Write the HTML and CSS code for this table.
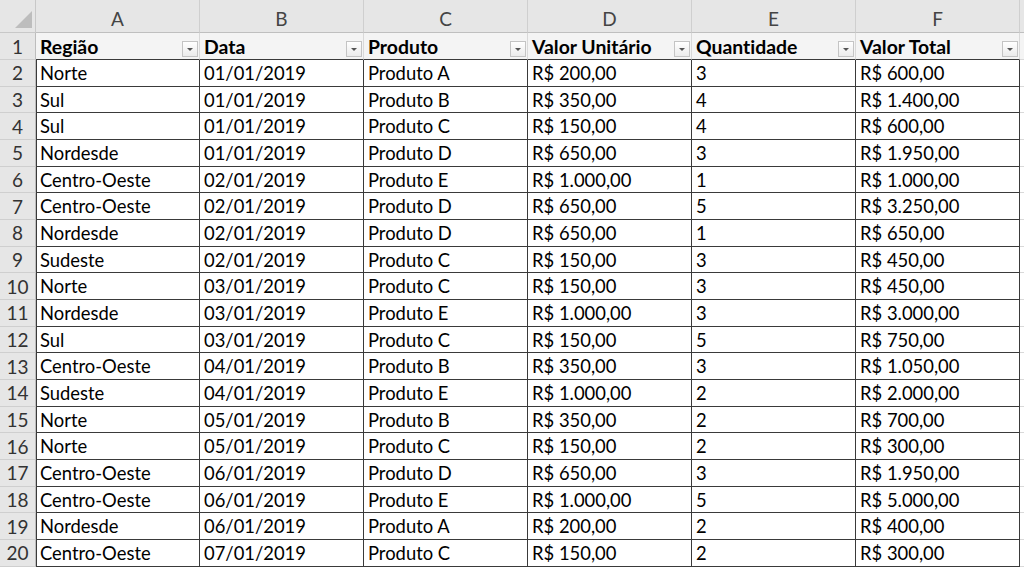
FILE: index.html
```html
<!DOCTYPE html>
<html>
<head>
<meta charset="utf-8">
<link rel="stylesheet" href="styles.css">
</head>
<body>
<div class="sheet">
  <div class="corner"><span class="tri"></span></div>
  <div class="colh">A</div><div class="colh">B</div><div class="colh">C</div><div class="colh">D</div><div class="colh">E</div><div class="colh">F</div><div class="colh end"></div>

  <div class="rowh">1</div>
  <div class="hd"><span>Região</span><span class="fb"></span></div>
  <div class="hd"><span>Data</span><span class="fb"></span></div>
  <div class="hd"><span>Produto</span><span class="fb"></span></div>
  <div class="hd"><span>Valor Unitário</span><span class="fb"></span></div>
  <div class="hd"><span>Quantidade</span><span class="fb"></span></div>
  <div class="hd"><span>Valor Total</span><span class="fb"></span></div>
  <div class="gap top"></div>

  <div class="rowh">2</div><div class="c a">Norte</div><div class="c">01/01/2019</div><div class="c">Produto A</div><div class="c">R$ 200,00</div><div class="c">3</div><div class="c">R$ 600,00</div><div class="gap"></div>
  <div class="rowh">3</div><div class="c a">Sul</div><div class="c">01/01/2019</div><div class="c">Produto B</div><div class="c">R$ 350,00</div><div class="c">4</div><div class="c">R$ 1.400,00</div><div class="gap"></div>
  <div class="rowh">4</div><div class="c a">Sul</div><div class="c">01/01/2019</div><div class="c">Produto C</div><div class="c">R$ 150,00</div><div class="c">4</div><div class="c">R$ 600,00</div><div class="gap"></div>
  <div class="rowh">5</div><div class="c a">Nordesde</div><div class="c">01/01/2019</div><div class="c">Produto D</div><div class="c">R$ 650,00</div><div class="c">3</div><div class="c">R$ 1.950,00</div><div class="gap"></div>
  <div class="rowh">6</div><div class="c a">Centro-Oeste</div><div class="c">02/01/2019</div><div class="c">Produto E</div><div class="c">R$ 1.000,00</div><div class="c">1</div><div class="c">R$ 1.000,00</div><div class="gap"></div>
  <div class="rowh">7</div><div class="c a">Centro-Oeste</div><div class="c">02/01/2019</div><div class="c">Produto D</div><div class="c">R$ 650,00</div><div class="c">5</div><div class="c">R$ 3.250,00</div><div class="gap"></div>
  <div class="rowh">8</div><div class="c a">Nordesde</div><div class="c">02/01/2019</div><div class="c">Produto D</div><div class="c">R$ 650,00</div><div class="c">1</div><div class="c">R$ 650,00</div><div class="gap"></div>
  <div class="rowh">9</div><div class="c a">Sudeste</div><div class="c">02/01/2019</div><div class="c">Produto C</div><div class="c">R$ 150,00</div><div class="c">3</div><div class="c">R$ 450,00</div><div class="gap"></div>
  <div class="rowh">10</div><div class="c a">Norte</div><div class="c">03/01/2019</div><div class="c">Produto C</div><div class="c">R$ 150,00</div><div class="c">3</div><div class="c">R$ 450,00</div><div class="gap"></div>
  <div class="rowh">11</div><div class="c a">Nordesde</div><div class="c">03/01/2019</div><div class="c">Produto E</div><div class="c">R$ 1.000,00</div><div class="c">3</div><div class="c">R$ 3.000,00</div><div class="gap"></div>
  <div class="rowh">12</div><div class="c a">Sul</div><div class="c">03/01/2019</div><div class="c">Produto C</div><div class="c">R$ 150,00</div><div class="c">5</div><div class="c">R$ 750,00</div><div class="gap"></div>
  <div class="rowh">13</div><div class="c a">Centro-Oeste</div><div class="c">04/01/2019</div><div class="c">Produto B</div><div class="c">R$ 350,00</div><div class="c">3</div><div class="c">R$ 1.050,00</div><div class="gap"></div>
  <div class="rowh">14</div><div class="c a">Sudeste</div><div class="c">04/01/2019</div><div class="c">Produto E</div><div class="c">R$ 1.000,00</div><div class="c">2</div><div class="c">R$ 2.000,00</div><div class="gap"></div>
  <div class="rowh">15</div><div class="c a">Norte</div><div class="c">05/01/2019</div><div class="c">Produto B</div><div class="c">R$ 350,00</div><div class="c">2</div><div class="c">R$ 700,00</div><div class="gap"></div>
  <div class="rowh">16</div><div class="c a">Norte</div><div class="c">05/01/2019</div><div class="c">Produto C</div><div class="c">R$ 150,00</div><div class="c">2</div><div class="c">R$ 300,00</div><div class="gap"></div>
  <div class="rowh">17</div><div class="c a">Centro-Oeste</div><div class="c">06/01/2019</div><div class="c">Produto D</div><div class="c">R$ 650,00</div><div class="c">3</div><div class="c">R$ 1.950,00</div><div class="gap"></div>
  <div class="rowh">18</div><div class="c a">Centro-Oeste</div><div class="c">06/01/2019</div><div class="c">Produto E</div><div class="c">R$ 1.000,00</div><div class="c">5</div><div class="c">R$ 5.000,00</div><div class="gap"></div>
  <div class="rowh">19</div><div class="c a">Nordesde</div><div class="c">06/01/2019</div><div class="c">Produto A</div><div class="c">R$ 200,00</div><div class="c">2</div><div class="c">R$ 400,00</div><div class="gap"></div>
  <div class="rowh">20</div><div class="c a">Centro-Oeste</div><div class="c">07/01/2019</div><div class="c">Produto C</div><div class="c">R$ 150,00</div><div class="c">2</div><div class="c">R$ 300,00</div><div class="gap"></div>
</div>
</body>
</html>
```

FILE: styles.css
```css
html, body {
  margin: 0;
  padding: 0;
  background: #ffffff;
  overflow: hidden;
}
.sheet {
  display: grid;
  grid-template-columns: 36px repeat(6, 164px) 4px;
  grid-template-rows: 33px 27px repeat(19, 26.68px);
  width: 1024px;
  height: 568px;
  font-family: Lato, "Liberation Sans", sans-serif;
  font-size: 18.4px;
  font-variant-ligatures: none;
  font-feature-settings: "liga" 0, "dlig" 0;
  color: #000;
}
.sheet > div {
  box-sizing: border-box;
  min-width: 0;
}
.corner {
  background: #e6e6e6;
  border-right: 1px solid #c8c8c8;
  border-bottom: 1px solid #c8c8c8;
  display: flex;
  justify-content: flex-end;
  align-items: flex-end;
  padding: 0 3px 4px 0;
}
.tri {
  width: 0;
  height: 0;
  border-left: 17px solid transparent;
  border-bottom: 17px solid #bdbdbd;
}
.colh {
  background: #e6e6e6;
  border-right: 1px solid #cfcfcf;
  border-bottom: 1px solid #bfbfbf;
  color: #444;
  font-size: 19px;
  display: flex;
  justify-content: center;
  align-items: center;
  padding-top: 4px;
}
.colh.end {
  border-right: none;
}
.rowh {
  background: #e6e6e6;
  border-right: 1px solid #bdbdbd;
  border-bottom: 1px solid #cfcfcf;
  color: #333;
  font-size: 19px;
  display: flex;
  justify-content: center;
  align-items: center;
}
.hd {
  background: #f4f4f4;
  border-right: 1px solid #d9d9d9;
  border-bottom: 1px solid #3a3a3a;
  font-weight: bold;
  font-size: 19.4px;
  display: flex;
  justify-content: space-between;
  align-items: center;
  padding-left: 4px;
  padding-right: 1px;
  white-space: nowrap;
}
.fb {
  width: 16px;
  height: 16px;
  box-sizing: border-box;
  align-self: flex-end;
  margin-bottom: 2px;
  border: 1px solid #c4c4c4;
  background: linear-gradient(#ffffff, #ebebeb);
  display: flex;
  justify-content: center;
  align-items: center;
  flex-shrink: 0;
}
.fb::after {
  content: "";
  width: 0;
  height: 0;
  border-left: 3px solid transparent;
  border-right: 3px solid transparent;
  border-top: 3px solid #555;
  margin-top: 1px;
}
.c {
  border-right: 1px solid #3a3a3a;
  border-bottom: 1px solid #3a3a3a;
  display: flex;
  align-items: center;
  padding-left: 4px;
  white-space: nowrap;
}
.c.a {
  border-left: 1px solid #3a3a3a;
  padding-left: 3px;
}
.gap {
  border-bottom: 1px solid #d9d9d9;
}
.gap.top {
  background: #f4f4f4;
}
```
